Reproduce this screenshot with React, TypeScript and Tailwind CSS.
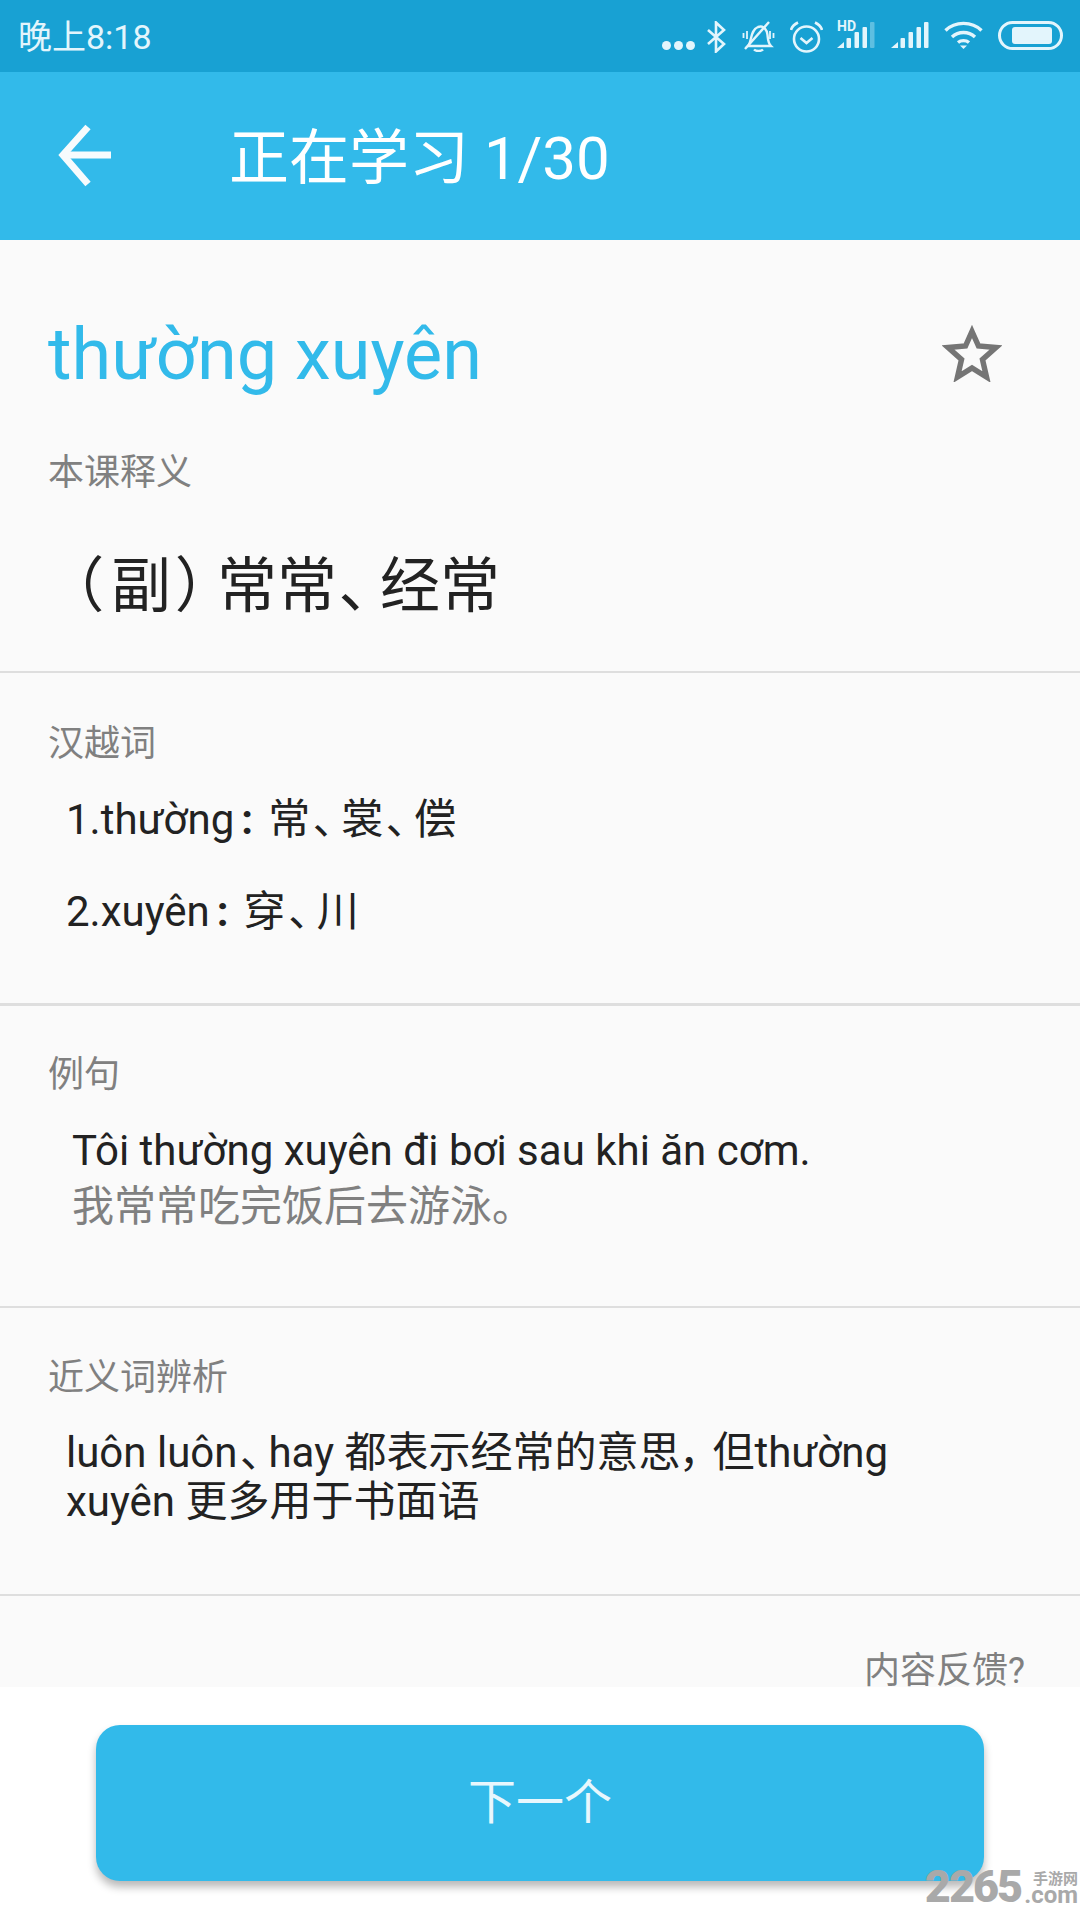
const font = { fontFamily: '"Roboto", "Noto Sans CJK SC", sans-serif' };

function Signal({ faded }: { faded?: boolean }) {
  return (
    <svg width="38" height="27" viewBox="0 0 38 27" fill="currentColor">
      <path d="M0 27 L7 21 V27 Z" />
      <rect x="9.5" y="17" width="4.5" height="10" rx="1" />
      <rect x="17.5" y="11" width="4.5" height="16" rx="1" />
      <rect x="25.5" y="6" width="4.5" height="21" rx="1" />
      <rect x="33" y="1" width="4.5" height="26" rx="1" opacity={faded ? 0.35 : 1} />
    </svg>
  );
}

function StatusIcons() {
  return (
    <div className="flex items-start pt-[21px] text-[#e3f5fc]">
      <div className="mt-[20px] flex gap-[3px]">
        <span className="h-[9px] w-[9px] rounded-full bg-[#e3f5fc]" />
        <span className="h-[9px] w-[9px] rounded-full bg-[#e3f5fc]" />
        <span className="h-[9px] w-[9px] rounded-full bg-[#e3f5fc]" />
      </div>
      {/* bluetooth */}
      <svg width="19" height="32" viewBox="0 0 19 32" className="ml-[12px]" fill="none" stroke="currentColor" strokeWidth="2.6">
        <path d="M1 9 L17 23 L9 30.5 V1.5 L17 9 L1 23" />
      </svg>
      {/* muted bell */}
      <svg width="33" height="31" viewBox="0 0 33 31" className="ml-[16px]" fill="none" stroke="currentColor" strokeWidth="2.4">
        <path d="M6 25 C10 21 8 9 16 6 C22 4 25 9 25.5 14 C26 19 26 22 29 25 Z" />
        <path d="M3 28 L27 1" />
        <path d="M12 28.5 C14 30.5 19 30.5 21 28.5" />
        <path d="M1.5 12 V17 M5 10 V18 M28 10 V18 M31.5 12 V17" strokeWidth="1.8" />
      </svg>
      {/* alarm */}
      <svg width="33" height="32" viewBox="0 0 33 32" className="ml-[15px]" fill="none" stroke="currentColor" strokeWidth="2.6">
        <circle cx="16.5" cy="18" r="12.5" />
        <path d="M10.5 17 L16.5 22 L22.5 17" />
        <path d="M1 9 C2 5 5 3 8 1.5 M32 9 C31 5 28 3 25 1.5" />
      </svg>
      <div className="relative ml-[14px] h-[28px] w-[38px]">
        <span className="absolute left-0 top-[-2px] text-[14px] font-bold leading-none">HD</span>
        <Signal faded />
      </div>
      <div className="ml-[16px]">
        <Signal />
      </div>
      <svg width="39" height="28" viewBox="0 0 39 28" className="ml-[15px]" fill="none" stroke="currentColor" strokeWidth="3.4">
        <path d="M1.5 9.5 C11 0 28 0 37.5 9.5" />
        <path d="M8 16 C14.5 10 24.5 10 31 16" />
        <path d="M14 21.5 C17 19 22 19 25 21.5" />
        <path d="M16 24.5 L19.5 28 L23 24.5 Z" fill="currentColor" stroke="none" />
      </svg>
      <div className="ml-[15px] flex h-[29px] w-[65px] items-center rounded-full border-[3px] border-[#e3f5fc] pl-[11px] pr-[8px]">
        <div className="h-[17px] w-full rounded-[3px] bg-[#e3f5fc]" />
      </div>
    </div>
  );
}

function Label({ children }: { children: string }) {
  return <div className="text-[36px] leading-[42px] text-[#808080]">{children}</div>;
}

// punctuation in the reference is set tighter than full width
function Dun() {
  return <span className="ml-[3px] mr-[7px] [font-feature-settings:'palt']">、</span>;
}

function Colon() {
  return <span className="ml-[7px] mr-[15px] font-bold">:</span>;
}

export default function App() {
  return (
    <div className="relative flex h-[1920px] w-[1080px] flex-col overflow-hidden bg-white" style={font}>
      <div className="flex h-[72px] items-start justify-between bg-[#18a1d3] pl-[18px] pr-[17px]">
        <span className="mt-[20px] text-[34px] leading-none text-[#e3f5fc]">晚上8:18</span>
        <StatusIcons />
      </div>

      <div className="flex h-[168px] items-center bg-[#32baea] pl-[57px] text-white">
        <svg width="54" height="64" viewBox="0 0 54 64" fill="none" stroke="#f7fbfd" strokeWidth="7" className="shrink-0">
          <path d="M54 31 H5" />
          <path d="M31 3 L6 31 L31 60" />
        </svg>
        <span className="ml-[118px] mt-[5px] text-[60px] leading-none">正在学习 1/30</span>
      </div>

      <div className="flex h-[1447px] flex-col overflow-hidden bg-[#fafafa]">
        <section className="h-[433px] shrink-0 border-b-2 border-[#dedede] pl-[48px] pr-[78px]">
          <div className="flex h-[157px] items-end justify-between">
            <span className="text-[72px] leading-[84px] text-[#32baea]">thường xuyên</span>
            <svg width="60" height="58" viewBox="0 0 60 58" fill="none" stroke="#757575" strokeWidth="5.5" className="mb-[15px]">
              <path d="M30 7.5 L36.5 22 L54 23.5 L40.5 35.5 L44.5 53 L30 44 L15.5 53 L19.5 35.5 L6 23.5 L23.5 22 Z" />
            </svg>
          </div>
          <div className="mt-[55px]">
            <Label>本课释义</Label>
          </div>
          <div className="mt-[58px] text-[60px] leading-[70px] text-[#222222] [&>span]:[font-feature-settings:'palt']">
            <span className="ml-[24px] mr-[9px]">（</span>副<span className="ml-[6px] mr-[10px]">）</span>常常
            <span className="ml-[2px] mr-[11px]">、</span>经常
          </div>
        </section>

        <section className="h-[333px] shrink-0 border-b-[3px] border-[#dedede] pl-[48px] pt-[50px]">
          <Label>汉越词</Label>
          <div className="mt-[31px] pl-[18px] text-[42px] leading-[47px] text-[#222222]">
            1.thường<Colon />常<Dun />裳<Dun />偿
          </div>
          <div className="mt-[45px] pl-[18px] text-[42px] leading-[47px] text-[#222222]">
            2.xuyên<Colon />穿<Dun />川
          </div>
        </section>

        <section className="h-[302px] shrink-0 border-b-2 border-[#dedede] pl-[48px] pt-[48px]">
          <Label>例句</Label>
          <div className="mt-[27px] pl-[24px] text-[42px] leading-[56px]">
            <div className="text-[#222222]">Tôi thường xuyên đi bơi sau khi ăn cơm.</div>
            <div className="text-[#808080]">我常常吃完饭后去游泳。</div>
          </div>
        </section>

        <section className="h-[288px] shrink-0 border-b-2 border-[#dedede] pl-[48px] pt-[49px]">
          <Label>近义词辨析</Label>
          <div className="mt-[29px] w-[900px] pl-[18px] text-[42px] leading-[49px] text-[#222222]">
            luôn luôn<Dun />hay 都表示经常的意思
            <span className="ml-[1px] mr-[10px] [font-feature-settings:'palt']">，</span>但thường xuyên 更多用于书面语
          </div>
        </section>

        <div className="shrink-0 pr-[55px] pt-[54px] text-right text-[36px] leading-[42px] text-[#808080]">内容反馈?</div>
      </div>

      <div className="flex flex-1 justify-center pt-[38px]">
        <button className="h-[156px] w-[888px] rounded-[24px] bg-[#32baea] text-[48px] text-[#e8f7fd] shadow-[0_6px_8px_rgba(0,0,0,0.28)]">
          下一个
        </button>
      </div>

      <div className="absolute bottom-[16px] right-[2px] flex items-end text-[#a9a9a9]">
        <span className="text-[45px] font-black leading-[34px] tracking-[-2px]">2265</span>
        <span className="ml-[3px] flex flex-col items-end font-bold">
          <span className="text-[15px] leading-[15px]">手游网</span>
          <span className="text-[24px] leading-[17px]">.com</span>
        </span>
      </div>
    </div>
  );
}
